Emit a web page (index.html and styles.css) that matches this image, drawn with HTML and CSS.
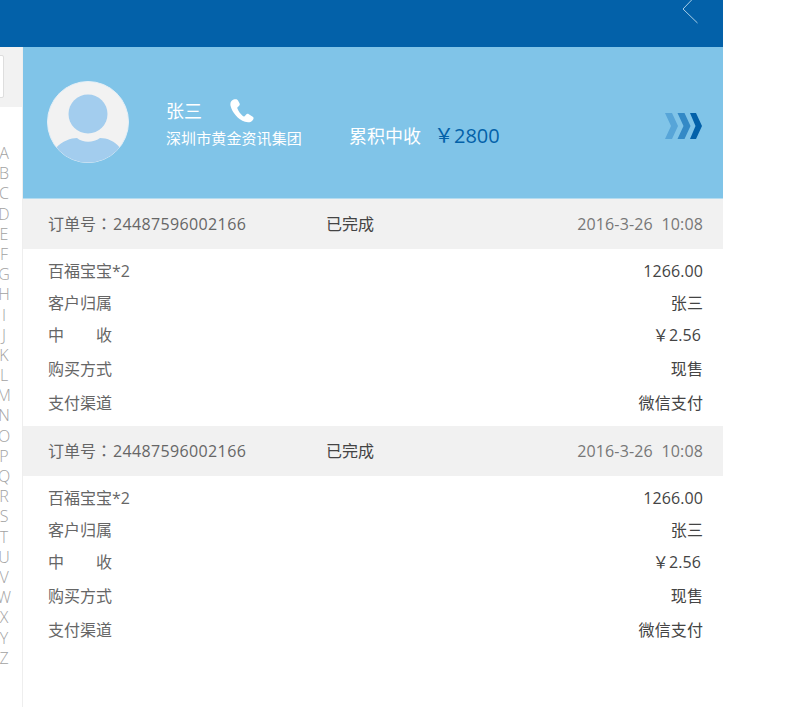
FILE: index.html
```html
<!DOCTYPE html>
<html lang="zh">
<head>
<meta charset="utf-8">
<title>订单详情</title>
<link rel="stylesheet" href="styles.css">
</head>
<body>
<div class="app">
  <header class="topbar">
    <svg class="back" width="18" height="24" viewBox="0 0 18 24"><path d="M12.5 -3 L1 9 L15.5 23" fill="none" stroke="#a9cfe8" stroke-width="1"/></svg>
  </header>
  <div class="content">
    <aside class="sidebar">
      <div class="search"><div class="search-box"></div></div>
      <ul class="letters">
        <li>A</li><li>B</li><li>C</li><li>D</li><li>E</li><li>F</li><li>G</li><li>H</li><li>I</li><li>J</li><li>K</li><li>L</li><li>M</li><li>N</li><li>O</li><li>P</li><li>Q</li><li>R</li><li>S</li><li>T</li><li>U</li><li>V</li><li>W</li><li>X</li><li>Y</li><li>Z</li>
      </ul>
    </aside>
    <main class="main">
      <section class="profile">
        <svg class="avatar" width="82" height="82" viewBox="0 0 82 82">
          <defs><clipPath id="round"><circle cx="41" cy="41" r="40.5"/></clipPath></defs>
          <circle cx="41" cy="41" r="40.5" fill="#f2f2f2" stroke="#e4eff7" stroke-width="1"/>
          <circle cx="41" cy="33" r="19.5" fill="#a3cdee"/>
          <path clip-path="url(#round)" d="M9 67 C15 60 24 57 30 57 C36 62 46 62 53 57 C60 57 68 60 73 67 L73 84 L9 84 Z" fill="#a3cdee"/>
        </svg>
        <div class="info">
          <div class="name-row">
            <span class="name">张三</span>
            <svg class="phone" width="24" height="24" viewBox="0 0 24 24"><path d="M3.6 .6 C1.2 1.4 -.2 3.6 .6 7 C2 13 8 20.6 15 22.8 C18.6 23.8 21.6 23.2 23.2 20.4 C24 19 23.6 18.2 22.4 17.4 L18.8 15.2 C17.6 14.6 16.8 14.8 16 15.8 L14.6 17.2 C14 17.6 13.4 17.6 12.8 17 C10.4 15 8.4 12.2 7.4 9.6 C7.2 8.8 7.4 8.4 8 7.8 L9 7 C9.8 6.2 10 5.4 9.6 4.4 L8 1.4 C7.2 0 5.4 -.2 3.6 .6 Z" fill="#ffffff"/></svg>
          </div>
          <div class="company">深圳市黄金资讯集团</div>
        </div>
        <div class="total">
          <span class="total-label">累积中收</span>
          <span class="total-value">￥2800</span>
        </div>
        <svg class="more" width="37" height="26" viewBox="0 0 37 26">
          <path d="M0 0 H7 L13 13 L7 26 H0 L6 13 Z" fill="#57a5d8"/>
          <path d="M12.5 0 H19.5 L25.5 13 L19.5 26 H12.5 L18.5 13 Z" fill="#3389c6"/>
          <path d="M25 0 H31 L37 13 L31 26 H25 L30.5 13 Z" fill="#0361a9"/>
        </svg>
      </section>

      <article class="order">
        <div class="order-head">
          <span class="order-no">订单号<span class="colon" lang="zh-TW">：</span><span class="num">24487596002166</span></span>
          <span class="order-status">已完成</span>
          <span class="order-date">2016-3-26&nbsp;&nbsp;10:08</span>
        </div>
        <div class="order-body">
          <div class="row row-s"><span>百福宝宝*2</span><span class="val">1266.00</span></div>
          <div class="row row-s"><span>客户归属</span><span class="val">张三</span></div>
          <div class="row row-m"><span class="spread"><span>中</span><span>收</span></span><span class="val val-money">￥2.56</span></div>
          <div class="row row-l"><span>购买方式</span><span class="val">现售</span></div>
          <div class="row row-l"><span>支付渠道</span><span class="val">微信支付</span></div>
        </div>
      </article>

      <article class="order">
        <div class="order-head">
          <span class="order-no">订单号<span class="colon" lang="zh-TW">：</span><span class="num">24487596002166</span></span>
          <span class="order-status">已完成</span>
          <span class="order-date">2016-3-26&nbsp;&nbsp;10:08</span>
        </div>
        <div class="order-body">
          <div class="row row-s"><span>百福宝宝*2</span><span class="val">1266.00</span></div>
          <div class="row row-s"><span>客户归属</span><span class="val">张三</span></div>
          <div class="row row-m"><span class="spread"><span>中</span><span>收</span></span><span class="val val-money">￥2.56</span></div>
          <div class="row row-l"><span>购买方式</span><span class="val">现售</span></div>
          <div class="row row-l"><span>支付渠道</span><span class="val">微信支付</span></div>
        </div>
      </article>
    </main>
  </div>
</div>
</body>
</html>
```
FILE: styles.css
```css
* { box-sizing: border-box; }
html, body { margin: 0; padding: 0; background: #fff; }
body {
  font-family: "Open Sans", "Noto Sans CJK SC", sans-serif;
  font-size: 16px;
  color: #666;
  overflow: hidden;
}
.app { width: 723px; height: 707px; display: flex; flex-direction: column; }
.topbar {
  height: 47px;
  flex: none;
  background: #0361a9;
  display: flex;
  justify-content: flex-end;
  align-items: flex-start;
  padding-right: 23px;
}
.back { display: block; }
.content { flex: 1; display: flex; min-height: 0; }
.sidebar {
  width: 23px;
  flex: none;
  border-right: 1px solid #eeeeee;
  overflow: hidden;
}
.search { height: 60px; background: #f2f2f2; padding-top: 8px; margin-left: -20px; }
.search-box { width: 24px; height: 43px; background: #fff; border: 1px solid #dedede; border-radius: 2px; }
.letters {
  list-style: none;
  margin: 36px 0 0;
  padding: 0;
  width: 8px;
  display: flex;
  flex-direction: column;
  align-items: center;
  color: #a2a2a2;
  font-size: 16px;
  font-weight: 300;
}
.letters li { height: 20.2px; line-height: 20.2px; }
.main { flex: 1; min-width: 0; }
.profile {
  height: 152px;
  background: #80c4e8;
  border-bottom: 1px solid #b5dcf0;
  display: flex;
  align-items: flex-start;
  padding: 34px 21px 0 24px;
}
.avatar { flex: none; display: block; }
.info { margin: 16px 0 0 37px; width: 136px; flex: none; color: #fff; display: flex; flex-direction: column; }
.name-row { display: flex; align-items: center; gap: 28px; height: 28px; }
.name { font-size: 18px; line-height: 28px; }
.phone { display: block; margin-top: -1px; }
.company { font-size: 15px; line-height: 24px; margin-top: 1px; white-space: nowrap; letter-spacing: .1px; }
.total { margin: 41px 0 0 47px; display: flex; align-items: center; gap: 15px; }
.total-label { font-size: 18px; line-height: 28px; color: #fff; }
.total-value { font-size: 20px; line-height: 28px; color: #0361a9; margin-left: -2px; }
.more { margin: 32px 0 0 auto; display: block; }
.order-head {
  height: 50px;
  background: #f1f1f1;
  padding: 0 20px 2px 25px;
  display: flex;
  align-items: center;
}
.order-no { width: 278px; flex: none; white-space: nowrap; }
.colon { font-family: "Noto Sans CJK TC", sans-serif; }
.num { letter-spacing: .36px; margin-left: 1px; }
.order-status { color: #444; }
.order-date { margin: 2px 0 0 auto; color: #777; white-space: nowrap; letter-spacing: .15px; }
.order-body { padding: 6px 20px 6px 25px; }
.row { display: flex; justify-content: space-between; align-items: baseline; }
.row-s { height: 32px; line-height: 32px; }
.row-m { height: 33px; line-height: 33px; }
.row-l { height: 34px; line-height: 34px; }
.val { color: #444; letter-spacing: .1px; }
.val-money { margin-right: 2px; }
.spread { width: 64px; display: flex; justify-content: space-between; }
```
